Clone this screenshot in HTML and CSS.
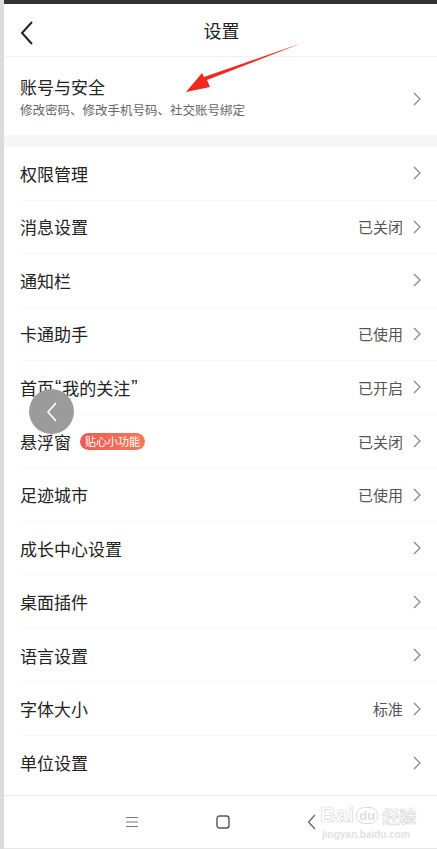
FILE: index.html
```html
<!DOCTYPE html>
<html lang="zh">
<head>
<meta charset="utf-8">
<link rel="stylesheet" href="styles.css">
</head>
<body>
<div class="screen">
  <div class="strip"></div>
  <div class="main">
    <div class="statusbar"></div>
    <header class="header">
      <svg class="back" width="14" height="24" viewBox="0 0 14 24"><path d="M12 1 L2 12 L12 23" fill="none" stroke="#222" stroke-width="2"/></svg>
      <h1 class="title">设置</h1>
    </header>
    <div class="account">
      <div class="account-text">
        <div class="account-title">账号与安全</div>
        <div class="account-sub">修改密码、修改手机号码、社交账号绑定</div>
      </div>
      <svg class="chev" width="8" height="14" viewBox="0 0 8 14"><path d="M1 1 L7 7 L1 13" fill="none" stroke="#888" stroke-width="1.3"/></svg>
    </div>
    <div class="band"></div>
    <ul class="list">
      <li class="row"><span class="label">权限管理</span><span class="right"><svg class="chev" width="8" height="14" viewBox="0 0 8 14"><path d="M1 1 L7 7 L1 13" fill="none" stroke="#888" stroke-width="1.3"/></svg></span></li>
      <li class="row"><span class="label">消息设置</span><span class="right"><span class="value">已关闭</span><svg class="chev" width="8" height="14" viewBox="0 0 8 14"><path d="M1 1 L7 7 L1 13" fill="none" stroke="#888" stroke-width="1.3"/></svg></span></li>
      <li class="row"><span class="label">通知栏</span><span class="right"><svg class="chev" width="8" height="14" viewBox="0 0 8 14"><path d="M1 1 L7 7 L1 13" fill="none" stroke="#888" stroke-width="1.3"/></svg></span></li>
      <li class="row"><span class="label">卡通助手</span><span class="right"><span class="value">已使用</span><svg class="chev" width="8" height="14" viewBox="0 0 8 14"><path d="M1 1 L7 7 L1 13" fill="none" stroke="#888" stroke-width="1.3"/></svg></span></li>
      <li class="row"><span class="label">首页<span class="q">“</span>我的关注<span class="q">”</span></span><span class="right"><span class="value">已开启</span><svg class="chev" width="8" height="14" viewBox="0 0 8 14"><path d="M1 1 L7 7 L1 13" fill="none" stroke="#888" stroke-width="1.3"/></svg></span></li>
      <li class="row"><span class="label">悬浮窗<span class="badge">贴心小功能</span></span><span class="right"><span class="value">已关闭</span><svg class="chev" width="8" height="14" viewBox="0 0 8 14"><path d="M1 1 L7 7 L1 13" fill="none" stroke="#888" stroke-width="1.3"/></svg></span></li>
      <li class="row"><span class="label">足迹城市</span><span class="right"><span class="value">已使用</span><svg class="chev" width="8" height="14" viewBox="0 0 8 14"><path d="M1 1 L7 7 L1 13" fill="none" stroke="#888" stroke-width="1.3"/></svg></span></li>
      <li class="row"><span class="label">成长中心设置</span><span class="right"><svg class="chev" width="8" height="14" viewBox="0 0 8 14"><path d="M1 1 L7 7 L1 13" fill="none" stroke="#888" stroke-width="1.3"/></svg></span></li>
      <li class="row"><span class="label">桌面插件</span><span class="right"><svg class="chev" width="8" height="14" viewBox="0 0 8 14"><path d="M1 1 L7 7 L1 13" fill="none" stroke="#888" stroke-width="1.3"/></svg></span></li>
      <li class="row"><span class="label">语言设置</span><span class="right"><svg class="chev" width="8" height="14" viewBox="0 0 8 14"><path d="M1 1 L7 7 L1 13" fill="none" stroke="#888" stroke-width="1.3"/></svg></span></li>
      <li class="row"><span class="label">字体大小</span><span class="right"><span class="value">标准</span><svg class="chev" width="8" height="14" viewBox="0 0 8 14"><path d="M1 1 L7 7 L1 13" fill="none" stroke="#888" stroke-width="1.3"/></svg></span></li>
      <li class="row last"><span class="label">单位设置</span><span class="right"><svg class="chev" width="8" height="14" viewBox="0 0 8 14"><path d="M1 1 L7 7 L1 13" fill="none" stroke="#888" stroke-width="1.3"/></svg></span></li>
    </ul>
    <nav class="navbar">
      <svg width="14" height="12" viewBox="0 0 14 12"><path d="M1 1.5 H13 M1 6 H13 M1 10.5 H13" stroke="#777" stroke-width="1.2"/></svg>
      <svg width="14" height="14" viewBox="0 0 14 14"><rect x="1" y="1" width="12" height="12" rx="2.5" fill="none" stroke="#555" stroke-width="1.4"/></svg>
      <svg width="9" height="16" viewBox="0 0 9 16"><path d="M8 1 L1.5 8 L8 15" fill="none" stroke="#666" stroke-width="1.3"/></svg>
    </nav>
    <div class="watermark">
      <div class="wm-top"><span class="wm-bai">Bai</span><span class="wm-du">du</span><span class="wm-jy">经验</span></div>
      <div class="wm-url">jingyan.baidu.com</div>
    </div>
    <div class="float-btn"><svg width="12" height="20" viewBox="0 0 12 20"><path d="M10 1 L2 10 L10 19" fill="none" stroke="#fff" stroke-width="1.6"/></svg></div>
    <svg class="arrow" width="437" height="120" viewBox="0 0 437 120"><path d="M302 43 L207 80 L210 87 L186 92 L202 73 L204 77 Z" fill="#f0281e"/></svg>
  </div>
</div>
</body>
</html>
```
FILE: styles.css
```css
* { box-sizing: border-box; }
html, body { margin: 0; padding: 0; background: #fff; }
body { font-family: "Noto Sans CJK SC", "Noto Sans", sans-serif; color: #222; }
.screen { display: flex; width: 437px; height: 849px; overflow: hidden; }
.strip { width: 4px; flex: none; background: #dcdcdc; }
.main { position: relative; flex: 1; display: flex; flex-direction: column; background: #fff; }
.statusbar { height: 4px; background: #333; flex: none; }
.header { height: 53px; flex: none; display: flex; align-items: center; justify-content: center; position: relative; border-bottom: 1px solid #f2f2f2; }
.back { position: absolute; left: 16px; top: 17px; }
.title { margin: 0; font-size: 18px; font-weight: 400; color: #222; position: relative; left: 1px; }
.account { height: 78px; flex: none; display: flex; align-items: center; justify-content: space-between; padding: 0 16px 0 16px; }
.account-text { display: flex; flex-direction: column; padding-top: 4px; }
.account-title { font-size: 17px; line-height: 22px; color: #222; }
.account-sub { font-size: 12.5px; line-height: 20px; color: #666; margin-top: 2px; }
.account .chev { margin-top: 6px; margin-right: 0; }
.band { height: 12px; flex: none; background: #f6f6f6; }
.list { list-style: none; margin: 0; padding: 0 0 0 16px; }
.row { height: 53.55px; display: flex; align-items: center; justify-content: space-between; padding-right: 16px; border-bottom: 1px solid #f8f8f8; }
.row.last { border-bottom: none; }
.label { font-size: 17px; color: #222; display: flex; align-items: center; }
.q { font-family: "Liberation Sans", sans-serif; font-size: 19px; margin: 0 1px; }
.right { display: flex; align-items: center; gap: 10px; }
.value { font-size: 15px; color: #555; }
.badge { margin-left: 9px; height: 17px; padding: 0 5px; border-radius: 9px; background: linear-gradient(90deg, #ef5a52, #f27a5a); color: #fff; font-size: 11px; line-height: 17px; display: inline-block; }
.navbar { margin-top: auto; height: 54px; flex: none; border-top: 1px solid #e8e8e8; border-bottom: 1px solid #e8e8e8; display: flex; align-items: center; justify-content: center; gap: 77px; padding-left: 0; }
.watermark { position: absolute; left: 316px; top: 804px; color: #e6e6e6; font-family: "Liberation Sans", sans-serif; line-height: 1; }
.wm-top { display: flex; align-items: center; font-size: 22px; font-weight: 700; -webkit-text-stroke: 0.7px #d8d8d8; color: #fff; }
.wm-du { font-size: 13px; border: 1.5px solid #ddd; border-radius: 8px; padding: 1px 2px; margin: 0 4px 0 2px; color: #ddd; -webkit-text-stroke: 0; }
.wm-jy { font-family: "Noto Sans CJK SC", sans-serif; font-size: 17px; }
.wm-url { font-size: 10px; font-weight: 700; color: #e2e2e2; margin-top: 4px; margin-left: 2px; }
.float-btn { position: absolute; left: 25px; top: 389px; width: 45px; height: 45px; border-radius: 50%; background: #9b9b9b; display: flex; align-items: center; justify-content: center; }
.arrow { position: absolute; left: -4px; top: 0; pointer-events: none; }
```
